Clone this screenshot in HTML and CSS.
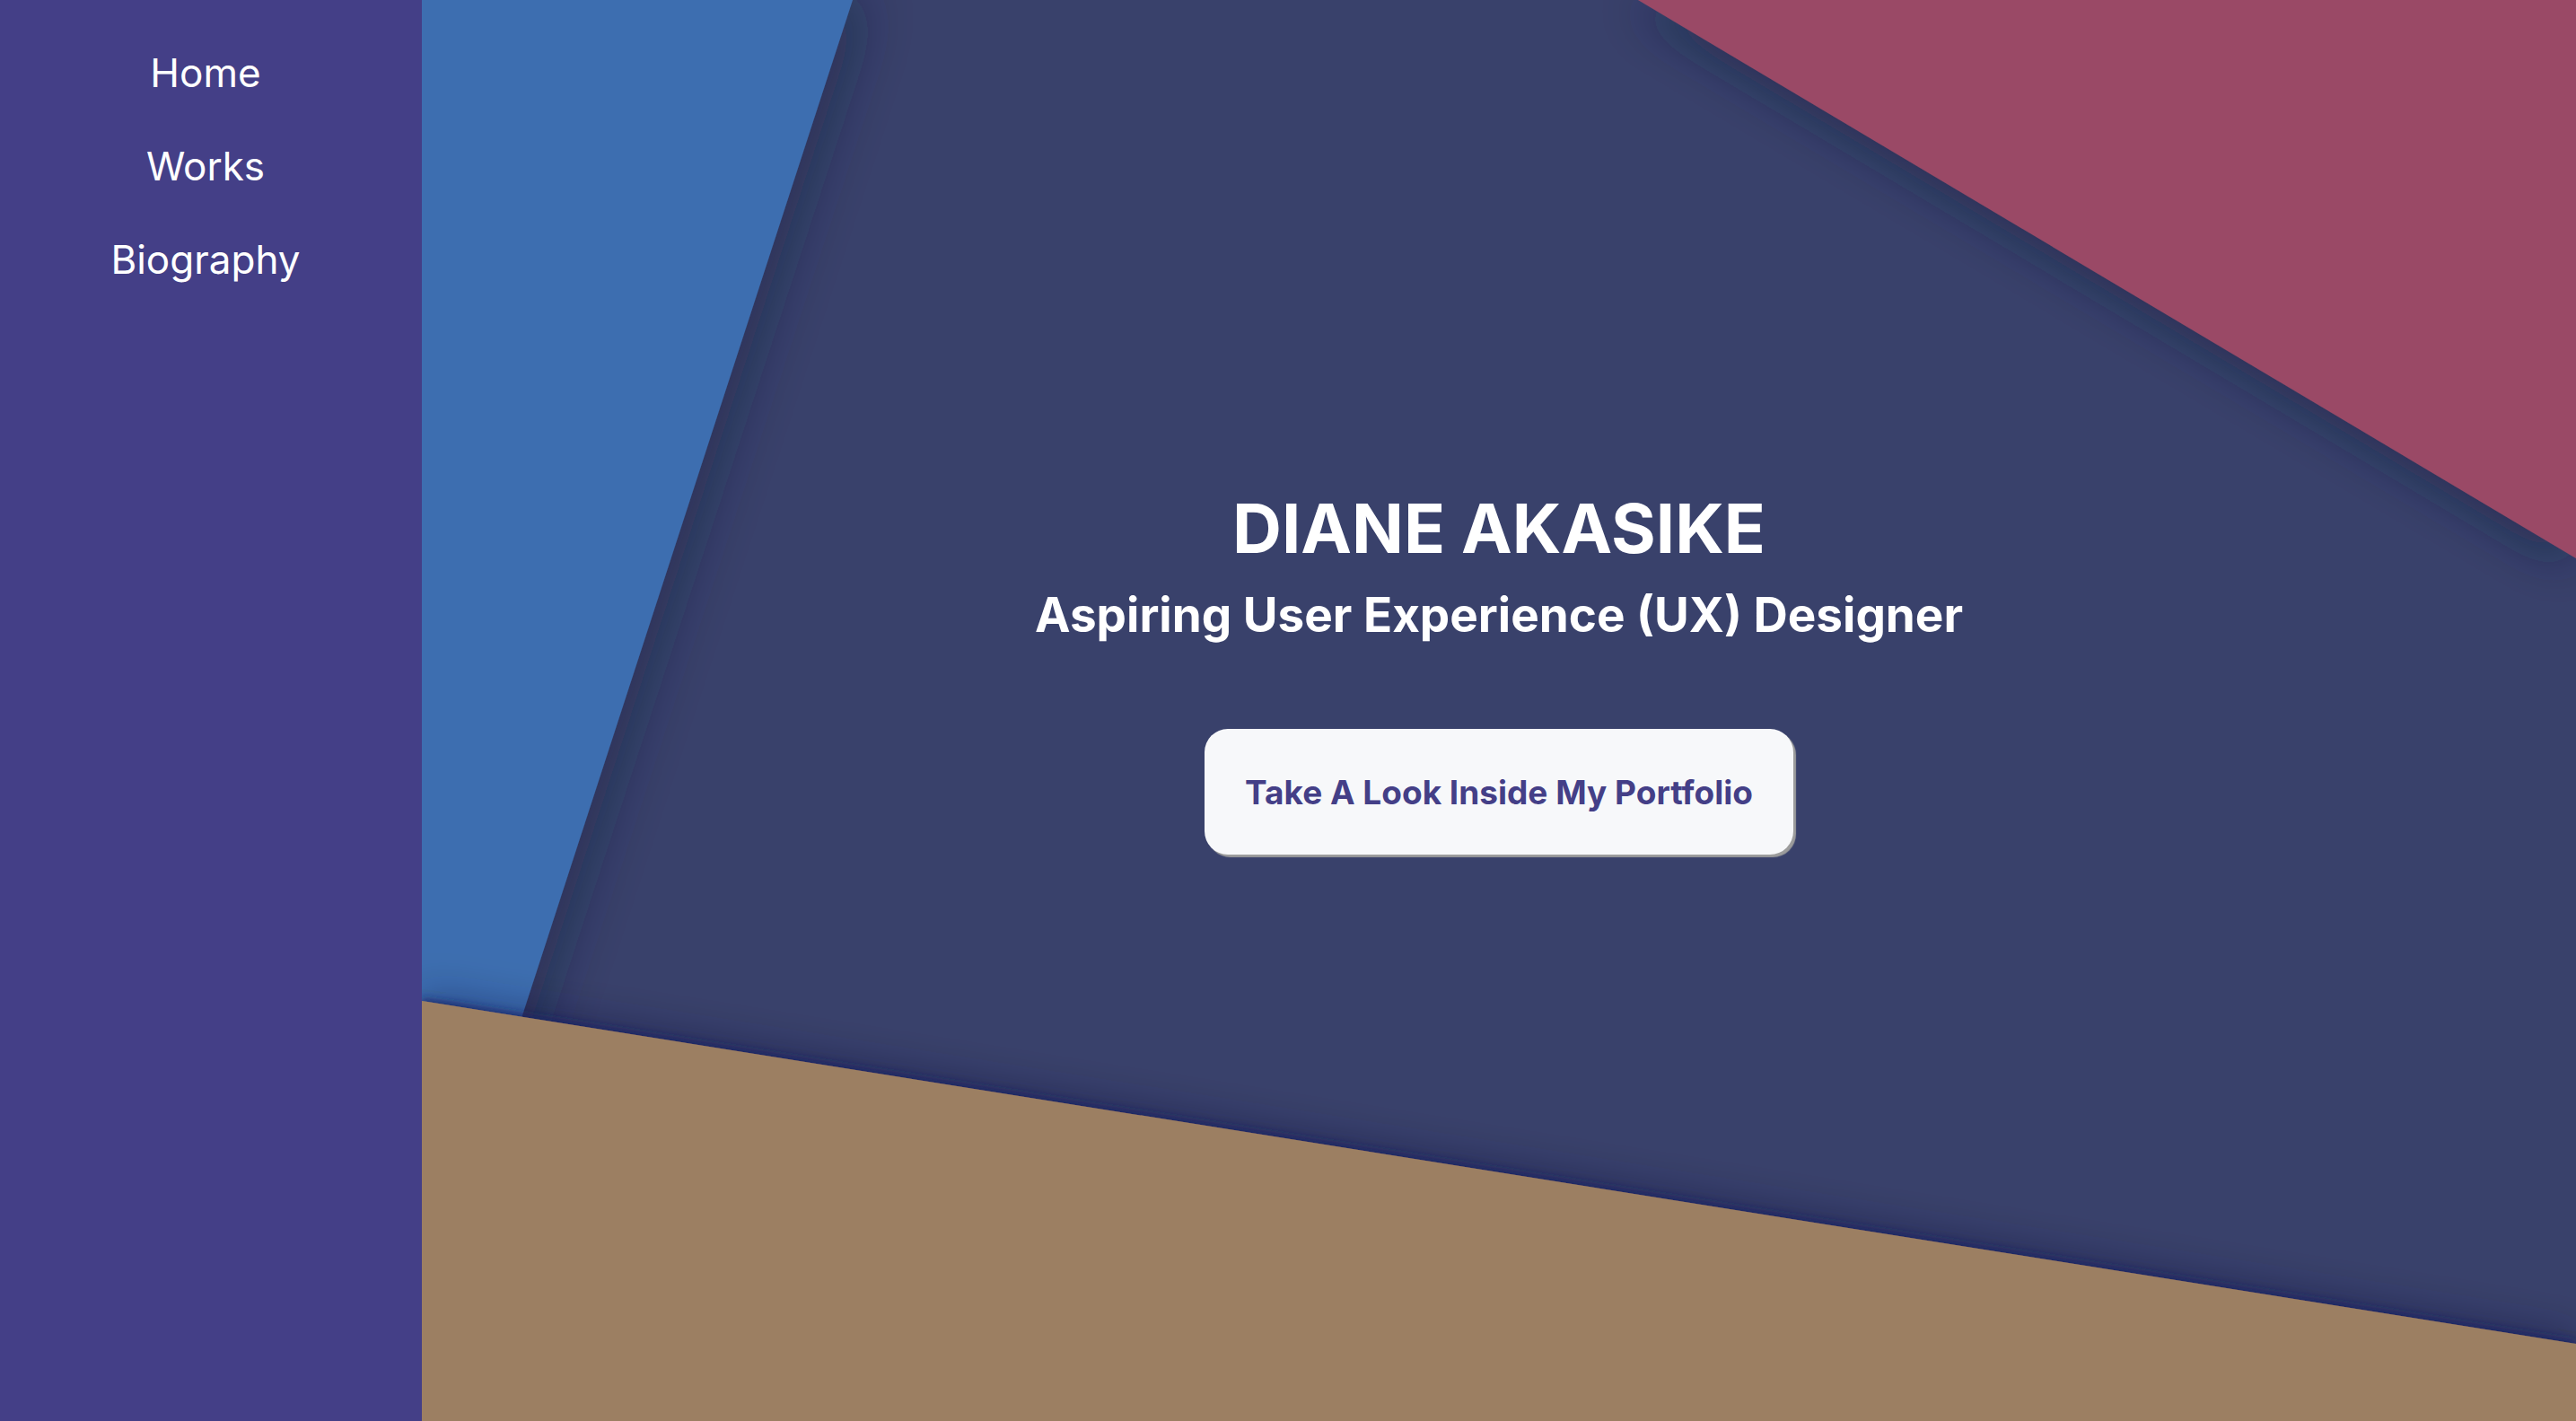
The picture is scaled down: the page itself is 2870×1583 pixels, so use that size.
FILE: index.html
```html
<!DOCTYPE html>
<html lang="en">
<head>
<meta charset="utf-8">
<title>Diane Akasike</title>
<link rel="stylesheet" href="styles.css">
</head>
<body>
<div class="page">
  <aside class="sidebar">
    <nav class="nav">
      <a class="nav-link" href="#">Home</a>
      <a class="nav-link" href="#">Works</a>
      <a class="nav-link" href="#">Biography</a>
    </nav>
  </aside>
  <main class="hero">
    <svg class="hero-bg" viewBox="0 0 2400 1583" preserveAspectRatio="none" aria-hidden="true">
      <defs>
        <filter id="shBlue" x="-20%" y="-20%" width="160%" height="140%">
          <feDropShadow dx="12" dy="0" stdDeviation="32" flood-color="#151a3a" flood-opacity="0.5"/>
        </filter>
        <filter id="shRed" x="-20%" y="-20%" width="140%" height="160%">
          <feDropShadow dx="-8" dy="8" stdDeviation="26" flood-color="#151a3a" flood-opacity="0.5"/>
        </filter>
        <filter id="shTan" x="-10%" y="-30%" width="120%" height="160%">
          <feDropShadow dx="0" dy="-3" stdDeviation="4" flood-color="#1c2166" flood-opacity="0.8"/>
          <feDropShadow dx="0" dy="-6" stdDeviation="22" flood-color="#151a3a" flood-opacity="0.35"/>
        </filter>
      </defs>
      <rect x="0" y="0" width="2400" height="1583" fill="#39416b"/>
      <polygon points="0,0 480,0 57,1300 0,1300" fill="#3d6eb0" filter="url(#shBlue)"/>
      <polygon points="1355,0 2400,0 2400,622" fill="#9a4966" filter="url(#shRed)"/>
      <polygon points="0,1115 2400,1497 2400,1583 0,1583" fill="#9c7f62" filter="url(#shTan)"/>
    </svg>
    <div class="hero-content">
      <h1 class="hero-title">DIANE AKASIKE</h1>
      <h2 class="hero-subtitle">Aspiring User Experience (UX) Designer</h2>
      <a class="hero-button" href="#">Take A Look Inside My Portfolio</a>
    </div>
  </main>
</div>
</body>
</html>
```
FILE: styles.css
```css
* { box-sizing: border-box; }
html, body { margin: 0; padding: 0; }
body {
  font-family: Inter, "Noto Sans", "Liberation Sans", sans-serif;
  background: #39416b;
  overflow: hidden;
}
.page {
  display: flex;
  width: 2870px;
  height: 1583px;
}
.sidebar {
  width: 470px;
  flex: 0 0 470px;
  background: #443f87;
}
.nav {
  display: flex;
  flex-direction: column;
  align-items: center;
  padding: 53px 12px 0 0;
  gap: 48px;
}
.nav-link {
  color: #ffffff;
  text-decoration: none;
  font-size: 44px;
  line-height: 56px;
  font-weight: 400;
}
.hero {
  position: relative;
  flex: 1;
  overflow: hidden;
}
.hero-bg {
  position: absolute;
  left: 0;
  top: 0;
  width: 100%;
  height: 100%;
  display: block;
}
.hero-content {
  position: relative;
  height: 100%;
  display: flex;
  flex-direction: column;
  align-items: center;
  justify-content: center;
  padding-bottom: 88px;
  color: #ffffff;
  text-align: center;
}
.hero-title {
  margin: 0;
  font-size: 76px;
  line-height: 1.2;
  font-weight: 700;
}
.hero-subtitle {
  margin: 20px 0 0;
  font-size: 53px;
  line-height: 1.2;
  font-weight: 700;
}
.hero-button {
  margin-top: 95px;
  display: block;
  padding: 49px 45px 47px;
  background: #f7f8fa;
  color: #443f87;
  font-size: 37px;
  line-height: 44px;
  font-weight: 700;
  text-decoration: none;
  border-radius: 26px;
  box-shadow: 3px 3px 1px #9c9c9c;
}
```
